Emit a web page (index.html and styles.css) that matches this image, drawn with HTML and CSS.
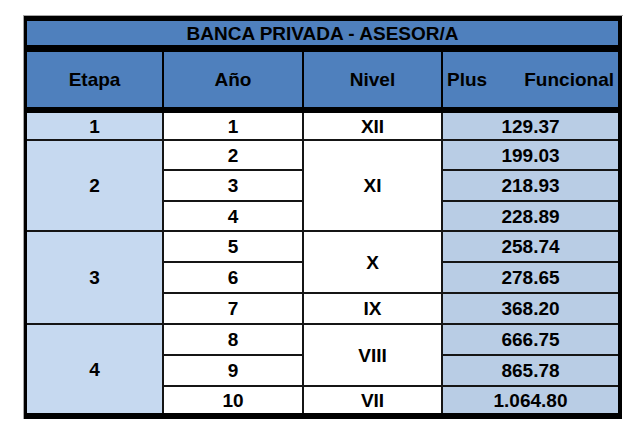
FILE: index.html
```html
<!DOCTYPE html>
<html lang="es">
<head>
<meta charset="utf-8">
<title>Banca Privada - Asesor/a</title>
<link rel="stylesheet" href="styles.css">
</head>
<body>
<div class="frame">
  <div class="sheet">
    <div class="title">BANCA PRIVADA - ASESOR/A</div>
    <div class="head">
      <div class="hcell">Etapa</div>
      <div class="hcell">Año</div>
      <div class="hcell">Nivel</div>
      <div class="hcell split"><span>Plus</span><span>Funcional</span></div>
    </div>
    <div class="body">
      <div class="cell etapa r1">1</div>
      <div class="cell etapa r2-4">2</div>
      <div class="cell etapa r5-7">3</div>
      <div class="cell etapa r8-10">4</div>

      <div class="cell anio r1">1</div>
      <div class="cell anio r2">2</div>
      <div class="cell anio r3">3</div>
      <div class="cell anio r4">4</div>
      <div class="cell anio r5">5</div>
      <div class="cell anio r6">6</div>
      <div class="cell anio r7">7</div>
      <div class="cell anio r8">8</div>
      <div class="cell anio r9">9</div>
      <div class="cell anio r10">10</div>

      <div class="cell nivel r1">XII</div>
      <div class="cell nivel r2-4">XI</div>
      <div class="cell nivel r5-6">X</div>
      <div class="cell nivel r7">IX</div>
      <div class="cell nivel r8-9">VIII</div>
      <div class="cell nivel r10">VII</div>

      <div class="cell plus r1">129.37</div>
      <div class="cell plus r2">199.03</div>
      <div class="cell plus r3">218.93</div>
      <div class="cell plus r4">228.89</div>
      <div class="cell plus r5">258.74</div>
      <div class="cell plus r6">278.65</div>
      <div class="cell plus r7">368.20</div>
      <div class="cell plus r8">666.75</div>
      <div class="cell plus r9">865.78</div>
      <div class="cell plus r10">1.064.80</div>
    </div>
  </div>
</div>
</body>
</html>
```

FILE: styles.css
```css
html, body {
  margin: 0;
  padding: 0;
  background: #ffffff;
}

body {
  font-family: "Liberation Sans", Arial, sans-serif;
  font-weight: bold;
  font-size: 19px;
  color: #000000;
}

.frame {
  margin: 15px 0 0 23px;
  width: 599px;
  border-top: 1px solid #a6a6a6;
  border-left: 1px solid #a6a6a6;
}

.sheet {
  width: 591px;
  border-style: solid;
  border-color: #000000;
  border-width: 5px 4px 6px 3px;
  background: #111111;
}

.title {
  height: 24px;
  line-height: 26px;
  text-align: center;
  background: #4f80bd;
  border-bottom: 7px solid #000000;
}

.head {
  display: grid;
  grid-template-columns: 135px 138px 137px 175px;
  column-gap: 2px;
  height: 55px;
  border-bottom: 6px solid #000000;
  background: #000000;
}

.hcell {
  background: #4f80bd;
  display: flex;
  align-items: center;
  justify-content: center;
  padding-top: 1px;
}

.hcell.split {
  justify-content: space-between;
  padding: 1px 4px 0 4px;
}

.body {
  display: grid;
  grid-template-columns: 135px 138px 137px 175px;
  grid-template-rows: 26px 28px 29px 28px 29px 29px 29px 29px 29px 26px;
  gap: 2px;
  background: #151515;
}

.cell {
  display: flex;
  align-items: center;
  justify-content: center;
  background: #ffffff;
  padding-top: 1px;
}

.etapa {
  grid-column: 1;
  background: #c6d9f0;
}

.anio {
  grid-column: 2;
}

.nivel {
  grid-column: 3;
}

.plus {
  grid-column: 4;
  background: #b9cde5;
}

.r1 { grid-row: 1; }
.r2 { grid-row: 2; }
.r3 { grid-row: 3; }
.r4 { grid-row: 4; }
.r5 { grid-row: 5; }
.r6 { grid-row: 6; }
.r7 { grid-row: 7; }
.r8 { grid-row: 8; }
.r9 { grid-row: 9; }
.r10 { grid-row: 10; }
.r2-4 { grid-row: 2 / 5; }
.r5-7 { grid-row: 5 / 8; }
.r8-10 { grid-row: 8 / 11; }
.r5-6 { grid-row: 5 / 7; }
.r8-9 { grid-row: 8 / 10; }
```
